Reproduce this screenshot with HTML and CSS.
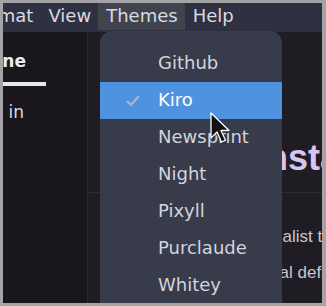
FILE: index.html
```html
<!DOCTYPE html>
<html>
<head>
	<meta charset="utf-8">
	<title>Themes menu</title>
	<link rel="stylesheet" href="styles.css">
</head>
<body>
	<div class="window">
		<div class="menubar">
			<div class="menu-item first">Format</div>
			<div class="menu-item">View</div>
			<div class="menu-item active">Themes</div>
			<div class="menu-item">Help</div>
		</div>
		<div class="content">
			<div class="sidebar">
				<div class="tabs">
					<div class="tab">Outline</div>
				</div>
				<div class="hint"><span>No headings here in</span></div>
			</div>
			<div class="main">
				<h1 class="title">Instant</h1>
				<hr class="rule">
				<p class="text first">A minimalist theme</p>
				<p class="text">Universal defaults</p>
			</div>
		</div>
		<ul class="dropdown">
			<li class="option">Github</li>
			<li class="option selected">
				<svg class="check" width="14" height="12" viewBox="0 0 14 12"><polyline points="1,6 5,10 13,1" fill="none" stroke="currentColor" stroke-width="2"/></svg>
				Kiro
			</li>
			<li class="option">Newsprint</li>
			<li class="option">Night</li>
			<li class="option">Pixyll</li>
			<li class="option">Purclaude</li>
			<li class="option">Whitey</li>
		</ul>
		<svg class="cursor" width="30" height="40" viewBox="0 0 30 40">
			<path d="M2 2 L2 27 L8 21 L12.5 31 L16.5 29.3 L12 19.5 L20 19.5 Z" fill="rgba(0,0,0,0.35)" transform="translate(1.5,1.5)"/>
			<path d="M2 2 L2 27 L8 21 L12.5 31 L16.5 29.3 L12 19.5 L20 19.5 Z" fill="#111" stroke="#fff" stroke-width="1.3" stroke-linejoin="round"/>
		</svg>
	</div>
</body>
</html>
```
FILE: styles.css
```css
html, body {
	margin: 0;
	padding: 0;
}
body {
	width: 326px;
	height: 306px;
	box-sizing: border-box;
	padding: 3px 4px 3px 3px;
	background-color: #a4a4a7;
	overflow: hidden;
	font-family: 'DejaVu Sans', sans-serif;
}
.window {
	position: relative;
	width: 319px;
	height: 300px;
	display: flex;
	flex-direction: column;
	overflow: hidden;
	background-color: #1f1d23;
}
.menubar {
	height: 29px;
	display: flex;
	align-items: flex-start;
	background-color: #2f3140;
	flex-shrink: 0;
}
.menu-item {
	flex-shrink: 0;
	height: 27px;
	line-height: 26px;
	padding: 0 7px 0 8px;
	font-size: 18px;
	color: #d9dae3;
}
.menu-item.first {
	margin-left: -41px;
}
.menu-item.active {
	background-color: #41444f;
}
.content {
	flex: 1;
	display: flex;
}
.sidebar {
	width: 84px;
	flex-shrink: 0;
	border-right: 1px solid #29272d;
	background-color: #19171c;
	overflow: hidden;
}
.tabs {
	display: flex;
	justify-content: flex-end;
	padding-right: 41px;
	margin-top: 17px;
}
.tab {
	flex-shrink: 0;
	padding: 0 20px 0 23px;
	height: 33px;
	line-height: 25px;
	font-size: 17px;
	font-weight: bold;
	color: #ecebf0;
	border-bottom: 4px solid #e9e7ee;
}
.hint {
	display: flex;
	justify-content: flex-end;
	padding-right: 63px;
	margin-top: 16px;
	white-space: nowrap;
	font-size: 17px;
	color: #dcdbe0;
}
.hint span {
	flex-shrink: 0;
}
.main {
	flex: 1;
	padding-left: 168px;
	overflow: hidden;
	white-space: nowrap;
	font-family: 'Liberation Sans', sans-serif;
}
.title {
	margin: 104px 0 0 0;
	font-size: 36px;
	line-height: 44px;
	color: #d7c4ef;
}
.rule {
	margin: 12px 0 0 -168px;
	border: 0;
	border-top: 1px solid #2e2b33;
}
.text {
	margin: 0 0 0 -34px;
	line-height: 36px;
	font-size: 17px;
	color: #c8c7cc;
}
.text.first {
	margin-top: 26px;
}
.dropdown {
	position: absolute;
	left: 97px;
	top: 28px;
	width: 182px;
	margin: 0;
	padding: 14px 0 0 0;
	list-style: none;
	border-radius: 12px 12px 0 0;
	background-color: #383b4a;
}
.option {
	position: relative;
	height: 37px;
	line-height: 36px;
	padding-left: 58px;
	font-size: 18px;
	color: #d2d4de;
}
.option.selected {
	background-color: #4f93e0;
	color: #fff;
}
.check {
	position: absolute;
	left: 26px;
	top: 13px;
	color: #aeb6c6;
}
.cursor {
	position: absolute;
	left: 206px;
	top: 108px;
}
```
